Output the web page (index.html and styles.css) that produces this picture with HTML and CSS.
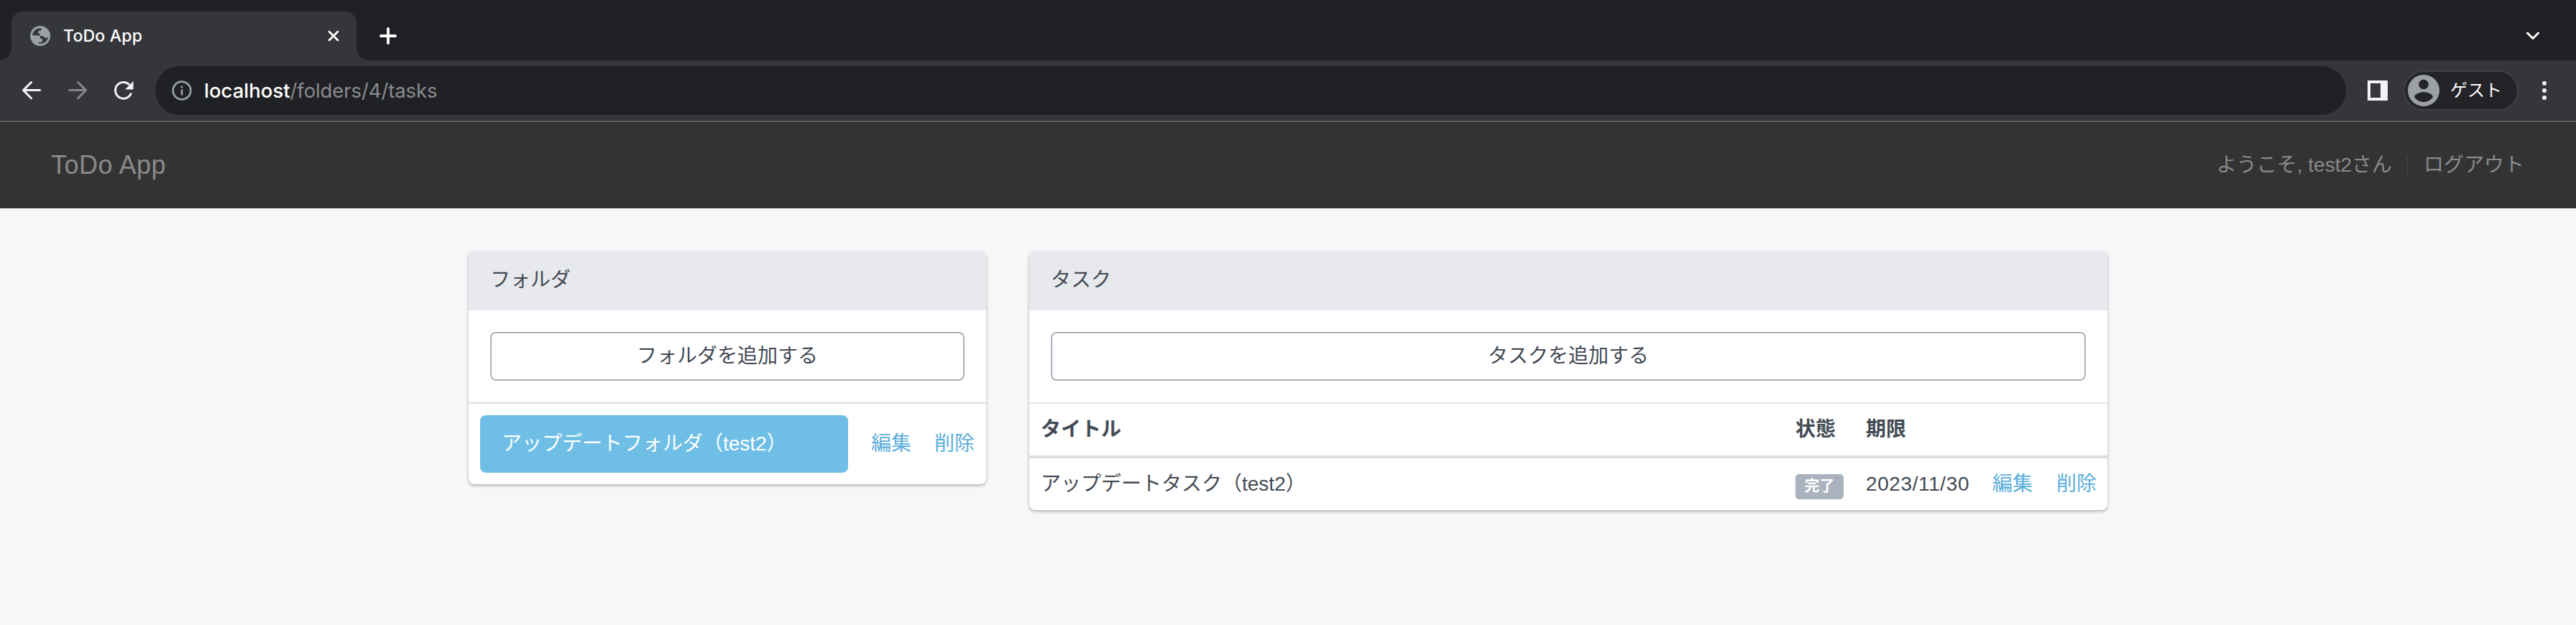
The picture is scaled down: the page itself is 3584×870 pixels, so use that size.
FILE: index.html
```html
<!DOCTYPE html>
<html lang="ja">
<head>
<meta charset="utf-8">
<title>ToDo App</title>
<link rel="stylesheet" href="styles.css">
</head>
<body>
<div class="browser">
  <div class="tabstrip">
    <div class="tab">
      <svg class="favicon" viewBox="0 0 28 28"><circle cx="14" cy="14" r="14" fill="#9aa0a6"/><path fill="#35363a" d="M15.500 3.200C9 2.800 3.600 7 3 13.300h7.500c2.500 0 3.500 1.200 3.500 3.200v1.300h1.500c1 0 1.500.6 1.500 1.500V21c0 1.200-.8 2-2.200 2h-3.300v1.400C18.500 26 24.300 21.500 25 15.500c-1 .9-2 1.300-3.200 1.300-1.700 0-2.700-1-2.800-2.600h-3.500c-1.400 0-2-.8-2-2v-1.500h-2.200V8.500c0-1.200.8-1.900 2-1.900h1.200c.7 0 1-.4 1-1.100z"/></svg>
      <span class="tab-title">ToDo App</span>
      <svg class="tab-close" viewBox="0 0 16 16"><path d="M2 2l12 12M14 2L2 14"/></svg>
    </div>
    <svg class="new-tab" viewBox="0 0 24 24"><path d="M12 2v20M2 12h20"/></svg>
    <svg class="tab-search" viewBox="0 0 18 12"><path d="M1.500 2l7.500 7.500L16.500 2"/></svg>
  </div>
  <div class="toolbar">
    <svg class="nav-icon" viewBox="0 0 28 28"><path d="M13.500 2.500L2.500 13.600l11 11.100M2.500 13.600h23"/></svg>
    <svg class="nav-icon nav-icon-off" viewBox="0 0 28 28"><path d="M14.500 2.500l11 11.100-11 11.100M25.500 13.600h-23"/></svg>
    <svg class="nav-icon reload" viewBox="0 0 28 28"><path d="M24.500 17.500A11.300 11.300 0 1 1 22 6"/><path class="solid" d="M27.500 1v11.500H16z"/></svg>
    <div class="omnibox">
      <svg class="info" viewBox="0 0 28 28"><circle cx="14" cy="14" r="12.300"/><path d="M14 12.500v8M14 7.500v2.800"/></svg>
      <span class="url">localhost<span class="path">/folders/4/tasks</span></span>
    </div>
    <svg class="side-panel" viewBox="0 0 28 28"><path d="M0 0h28v28H0zM4 4v20h14V4z"/></svg>
    <div class="profile">
      <svg class="avatar" viewBox="0 0 44 44"><circle cx="22" cy="22" r="22" fill="#9aa0a6"/><circle cx="22" cy="13.500" r="6.800" fill="#242328"/><path fill="#242328" d="M9 31c0-4 8-7 13-7s13 3 13 7c-3 4.500-8 7-13 7s-10-2.500-13-7z"/></svg>
      <span>ゲスト</span>
    </div>
    <svg class="menu" viewBox="0 0 6 26"><circle cx="3" cy="3" r="3"/><circle cx="3" cy="13" r="3"/><circle cx="3" cy="23" r="3"/></svg>
  </div>
</div>
<nav class="navbar">
  <a class="brand">ToDo App</a>
  <div class="account"><span>ようこそ, test2さん</span><i class="divider"></i><a>ログアウト</a></div>
</nav>
<main class="container">
  <section class="panel folders">
    <div class="panel-heading">フォルダ</div>
    <div class="panel-body"><a class="btn">フォルダを追加する</a></div>
    <div class="folder-row">
      <a class="folder">アップデートフォルダ（test2）</a>
      <a class="link">編集</a>
      <a class="link">削除</a>
    </div>
  </section>
  <section class="panel tasks">
    <div class="panel-heading">タスク</div>
    <div class="panel-body"><a class="btn">タスクを追加する</a></div>
    <div class="task-row head"><span>タイトル</span><span>状態</span><span>期限</span></div>
    <div class="task-row"><span>アップデートタスク（test2）</span><span class="status"><b class="label">完了</b></span><span class="due">2023/11/30</span><a class="link">編集</a><a class="link">削除</a></div>
  </section>
</main>
</body>
</html>
```
FILE: styles.css
```css
* { box-sizing: border-box; }
body { margin: 0; min-height: 870px; background: #f5f7f9; color: #434a54; font: 28px/44px "Liberation Sans", "Noto Sans CJK JP", sans-serif; white-space: nowrap; }
svg { display: block; flex: none; fill: none; }
.browser { background: #35363a; border-bottom: 2px solid #5b5e63; font-family: Inter, "Noto Sans CJK JP", sans-serif; }
.tabstrip { display: flex; align-items: center; height: 84px; padding: 16px 51px 0 16px; background: #202124; }
.tab { position: relative; display: flex; align-items: center; width: 480px; height: 68px; padding: 0 24px 0 26px; border-radius: 16px 16px 0 0; background: #35363a; }
.tab::before, .tab::after { content: ""; position: absolute; bottom: 0; width: 16px; height: 16px; }
.tab::before { left: -16px; background: radial-gradient(circle at 0 0, #202124 15.500px, #35363a 16px); }
.tab::after { right: -16px; background: radial-gradient(circle at 100% 0, #202124 15.500px, #35363a 16px); }
.favicon { width: 28px; height: 28px; }
.tab-title { margin-left: 18px; color: #fff; font-size: 23px; font-weight: 500; letter-spacing: .2px; }
.tab-close { width: 16px; height: 16px; margin-left: auto; stroke: #fff; stroke-width: 2.800; stroke-linecap: round; }
.new-tab { width: 24px; height: 24px; margin-left: 32px; stroke: #fff; stroke-width: 3.800; stroke-linecap: round; }
.tab-search { width: 18px; height: 12px; margin-left: auto; stroke: #fff; stroke-width: 3; stroke-linecap: round; }
.toolbar { display: flex; align-items: center; height: 84px; padding: 0 41px 0 30px; }
.nav-icon { width: 28px; height: 28px; margin-right: 36px; stroke: #f1f3f4; stroke-width: 3; stroke-linecap: round; stroke-linejoin: round; }
.nav-icon-off { stroke: #85868a; }
.reload { margin-right: 30px; stroke-linecap: butt; }
.solid { fill: #f1f3f4; stroke: none; }
.omnibox { display: flex; align-items: center; flex: 1; height: 68px; padding-left: 23px; border-radius: 34px; background: #202124; }
.info { width: 28px; height: 28px; stroke: #9aa0a6; stroke-width: 2.700; }
.url { margin-left: 17px; color: #fff; font-size: 27.500px; font-weight: 450; }
.path { color: #8a8b8e; font-weight: 400; letter-spacing: -.1px; }
.side-panel { width: 28px; height: 28px; margin: 0 22px 0 30px; fill: #f1f3f4; fill-rule: evenodd; }
.profile { display: flex; align-items: center; width: 160px; height: 56px; padding-left: 4px; border: 2px solid #3f4044; border-radius: 28px; background: #242328; color: #fff; font-size: 24px; }
.avatar { width: 44px; height: 44px; margin-right: 15px; }
.menu { width: 6px; height: 26px; margin-left: 33px; fill: #f1f3f4; }
.navbar { display: flex; align-items: center; justify-content: space-between; height: 120px; padding: 0 72px 0 71px; background: #333; color: #8a8a8a; }
.brand { font-size: 36px; letter-spacing: .5px; }
.account { display: flex; align-items: center; }
.divider { width: 1px; height: 26px; margin: 0 22px 0 21px; background: #434a54; }
.container { display: grid; grid-template-columns: 720px 1500px; gap: 60px; align-items: start; width: 2280px; margin: 60px auto 0; }
.panel { overflow: hidden; border-radius: 8px; background: #fff; box-shadow: 0 2px 4px rgba(0, 0, 0, .3); }
.panel-heading { height: 82px; padding: 18px 30px; background: #e7e9ec; }
.panel-body { height: 128px; padding: 30px; }
.btn { display: flex; align-items: center; justify-content: center; height: 68px; border: 2px solid #aab2bd; border-radius: 8px; }
.folder-row { display: flex; align-items: center; height: 114px; padding: 0 16px; border-top: 2px solid #ddd; }
.folder { flex: 1; height: 80px; margin-right: 32px; padding: 18px 30px; border-radius: 8px; background: #6ebee6; color: #fff; }
.link { color: #5aaedb; }
.link + .link { margin-left: 32px; }
.task-row .link + .link { margin-left: 32px; }
.task-row { display: grid; grid-template-columns: 1050px 98px 176px 57px 1fr; align-items: center; height: 72px; padding: 0 16px; }
.task-row.head { height: 78px; border-top: 2px solid #e6e9ed; border-bottom: 4px solid #ddd; font-weight: 700; }
.label { display: block; width: 67px; height: 35px; margin-top: 7px; border-radius: 5px; background: #aab2bd; color: #fff; font-size: 21px; line-height: 32px; text-align: center; }
.due { letter-spacing: .6px; }
```
